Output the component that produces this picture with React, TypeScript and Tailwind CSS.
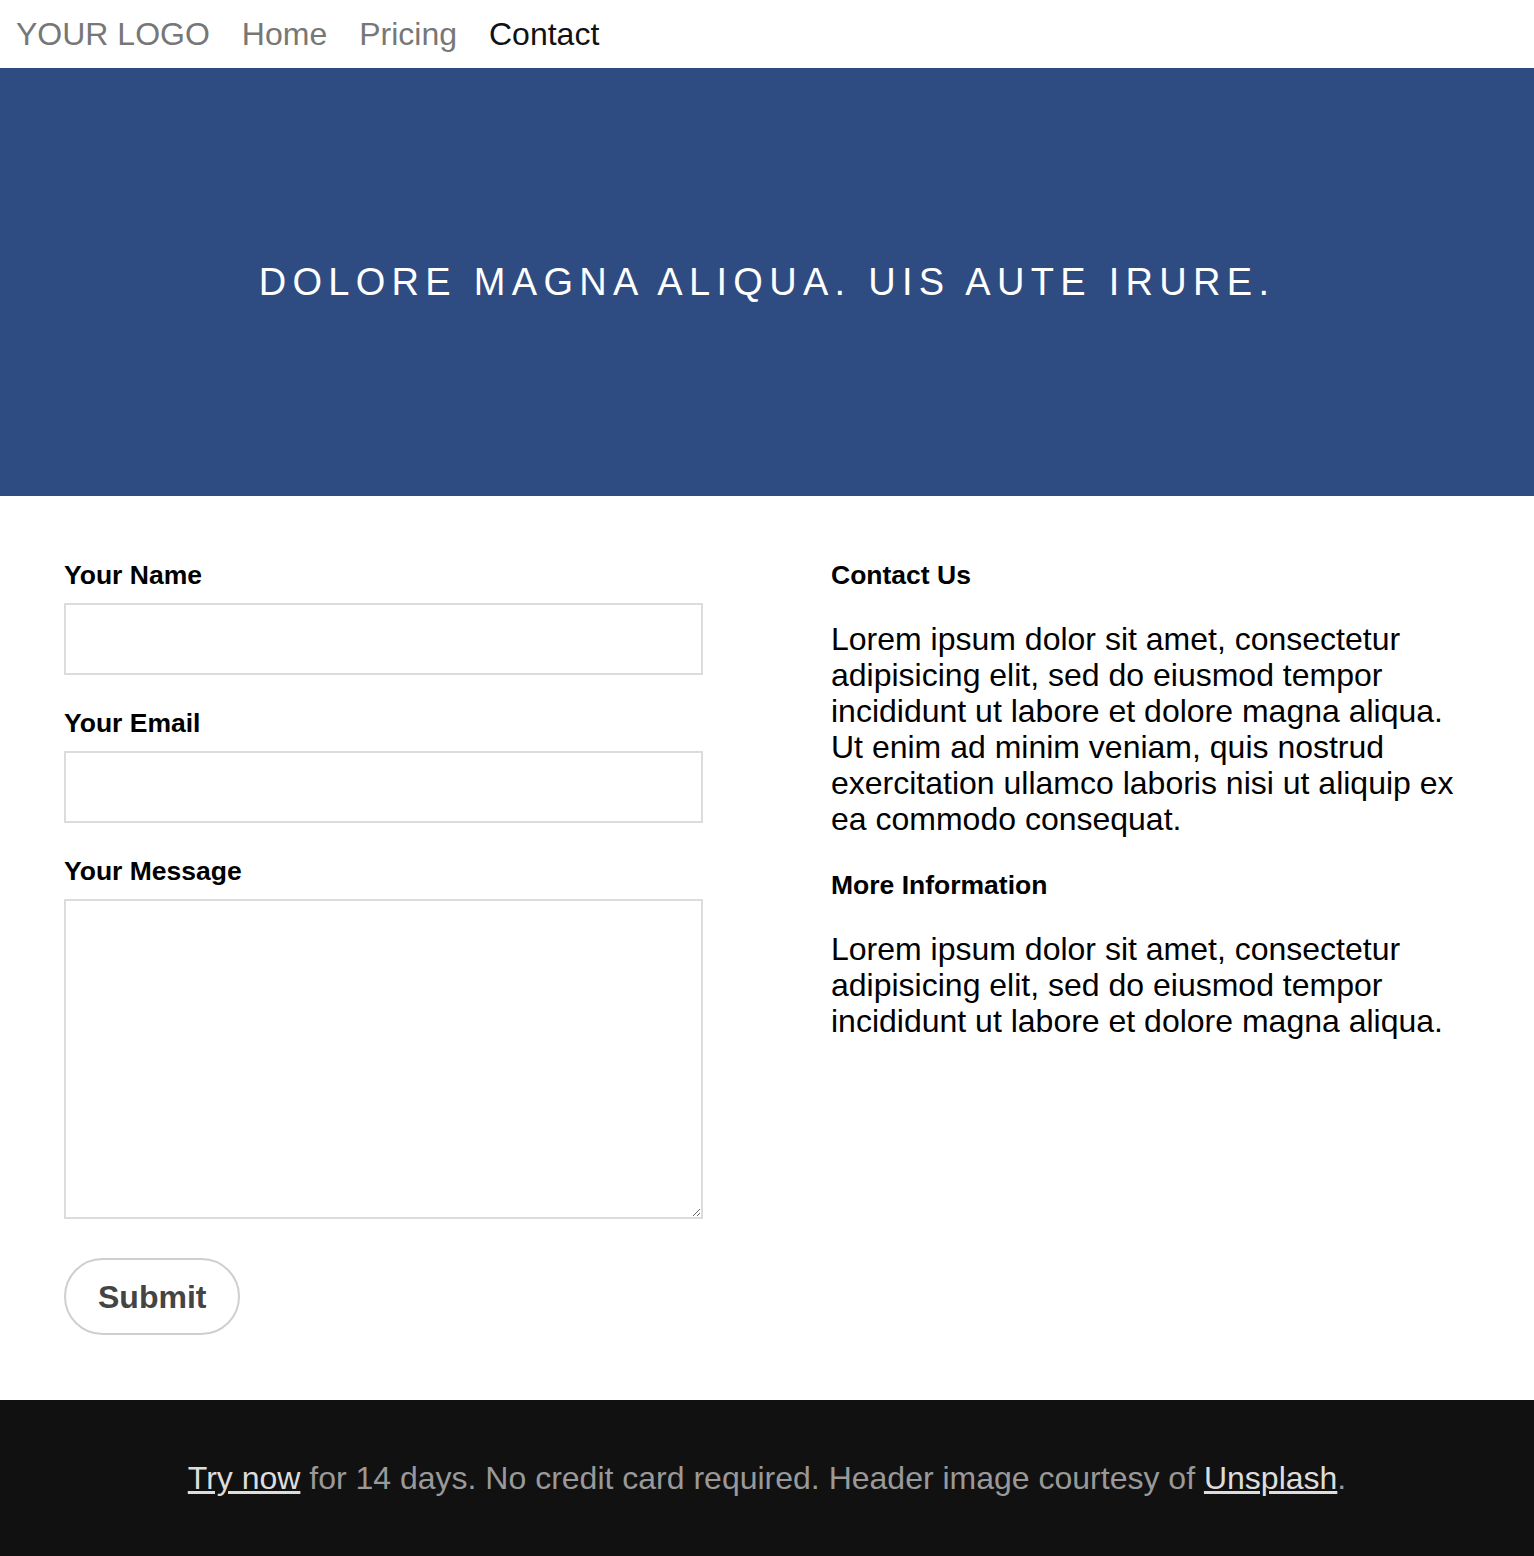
import React from 'react';

const navItems = [
  { name: 'Home', active: false },
  { name: 'Pricing', active: false },
  { name: 'Contact', active: true },
];

const Field: React.FC<{ label: string; tall?: boolean }> = ({ label, tall }) => (
  <div className="mb-8 last:mb-0">
    <label className="mb-3 block text-[26.5px] font-bold leading-8 text-black">{label}</label>
    {tall ? (
      <textarea className="block h-[320px] w-full border-2 border-[#dcdcdc] bg-white outline-none" />
    ) : (
      <input type="text" className="block h-[72px] w-full border-2 border-[#dcdcdc] bg-white outline-none" />
    )}
  </div>
);

export default function App() {
  return (
    <div className="min-h-screen bg-white font-['Liberation_Sans',Arial,sans-serif]">
      {/* Nav */}
      <header className="flex h-[68px] items-center gap-8 px-4 pb-px">
        <span className="text-[32px] leading-9 text-[#777]">YOUR LOGO</span>
        {navItems.map((item) => (
          <a
            key={item.name}
            href="#"
            className={`text-[32px] leading-9 ${item.active ? 'text-[#111]' : 'text-[#777]'}`}
          >
            {item.name}
          </a>
        ))}
      </header>

      {/* Hero */}
      <section className="flex h-[428px] items-center justify-center bg-[#2e4c82]">
        <h1 className="text-[38px] leading-[44px] tracking-[6.3px] text-white">
          DOLORE MAGNA ALIQUA. UIS AUTE IRURE.
        </h1>
      </section>

      {/* Content */}
      <main className="grid grid-cols-2 pb-[65px] pt-[63px]">
        <form className="px-16" onSubmit={(e) => e.preventDefault()}>
          <Field label="Your Name" />
          <Field label="Your Email" />
          <Field label="Your Message" tall />
          <button
            type="submit"
            className="mt-[39px] flex h-[77px] items-center rounded-full border-2 border-[#cfcfcf] bg-white px-8 text-[32px] font-bold text-[#444]"
          >
            Submit
          </button>
        </form>

        <div className="px-16">
          <h3 className="mb-[30px] text-[26.5px] font-bold leading-8 text-black">Contact Us</h3>
          <p className="mb-8 text-[32px] leading-9 text-black">
            Lorem ipsum dolor sit amet, consectetur adipisicing elit, sed do eiusmod tempor incididunt ut labore
            et dolore magna aliqua. Ut enim ad minim veniam, quis nostrud exercitation ullamco laboris nisi ut
            aliquip ex ea commodo consequat.
          </p>
          <h3 className="mb-[30px] text-[26.5px] font-bold leading-8 text-black">More Information</h3>
          <p className="text-[32px] leading-9 text-black">
            Lorem ipsum dolor sit amet, consectetur adipisicing elit, sed do eiusmod tempor incididunt ut labore
            et dolore magna aliqua.
          </p>
        </div>
      </main>

      {/* Footer */}
      <footer className="flex h-[156px] items-center justify-center bg-[#111]">
        <p className="text-[32px] leading-9 text-[#999]">
          <a href="#" className="text-[#ddd] underline">
            Try now
          </a>{' '}
          for 14 days. No credit card required. Header image courtesy of{' '}
          <a href="#" className="text-[#ddd] underline">
            Unsplash
          </a>
          .
        </p>
      </footer>
    </div>
  );
}
